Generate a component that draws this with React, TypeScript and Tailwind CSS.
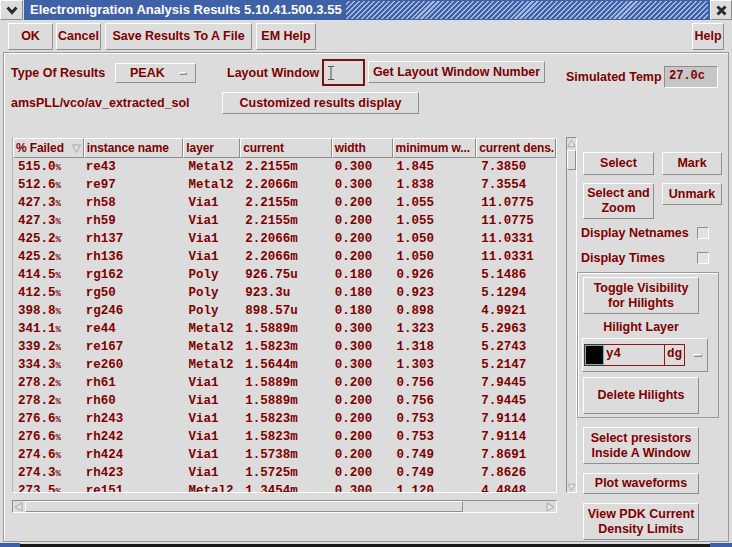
import React from "react";

const RED = "text-[#800000]";

const rows: string[][] = [
  ["515.0", "re43", "Metal2", "2.2155m", "0.300", "1.845", "7.3850"],
  ["512.6", "re97", "Metal2", "2.2066m", "0.300", "1.838", "7.3554"],
  ["427.3", "rh58", "Via1", "2.2155m", "0.200", "1.055", "11.0775"],
  ["427.3", "rh59", "Via1", "2.2155m", "0.200", "1.055", "11.0775"],
  ["425.2", "rh137", "Via1", "2.2066m", "0.200", "1.050", "11.0331"],
  ["425.2", "rh136", "Via1", "2.2066m", "0.200", "1.050", "11.0331"],
  ["414.5", "rg162", "Poly", "926.75u", "0.180", "0.926", "5.1486"],
  ["412.5", "rg50", "Poly", "923.3u", "0.180", "0.923", "5.1294"],
  ["398.8", "rg246", "Poly", "898.57u", "0.180", "0.898", "4.9921"],
  ["341.1", "re44", "Metal2", "1.5889m", "0.300", "1.323", "5.2963"],
  ["339.2", "re167", "Metal2", "1.5823m", "0.300", "1.318", "5.2743"],
  ["334.3", "re260", "Metal2", "1.5644m", "0.300", "1.303", "5.2147"],
  ["278.2", "rh61", "Via1", "1.5889m", "0.200", "0.756", "7.9445"],
  ["278.2", "rh60", "Via1", "1.5889m", "0.200", "0.756", "7.9445"],
  ["276.6", "rh243", "Via1", "1.5823m", "0.200", "0.753", "7.9114"],
  ["276.6", "rh242", "Via1", "1.5823m", "0.200", "0.753", "7.9114"],
  ["274.6", "rh424", "Via1", "1.5738m", "0.200", "0.749", "7.8691"],
  ["274.3", "rh423", "Via1", "1.5725m", "0.200", "0.749", "7.8626"],
  ["273.5", "re151", "Metal2", "1.3454m", "0.300", "1.120", "4.4848"],
];

const cols = [
  { name: "% Failed", head: "w-[71px]", cell: "w-[71px] pl-[5px]" },
  { name: "instance name", head: "w-[100px]", cell: "w-[100px] pl-[2px]" },
  { name: "layer", head: "w-[57px]", cell: "w-[57px] pl-[5px]" },
  { name: "current", head: "w-[92px]", cell: "w-[92px] pl-[5px]" },
  { name: "width", head: "w-[61px]", cell: "w-[61px] pl-[3px]" },
  { name: "minimum w...", head: "w-[84px]", cell: "w-[84px] pl-[4px]" },
  { name: "current dens.", head: "w-[80px]", cell: "w-[80px] pl-[5px]" },
];

const raised = "border border-t-white border-l-white border-r-[#8e8e8e] border-b-[#8e8e8e]";
const sunken = "border border-t-[#8e8e8e] border-l-[#8e8e8e] border-r-white border-b-white";

function Btn({ className = "", children }: { className?: string; children: React.ReactNode }) {
  return (
    <div
      className={`${raised} flex items-center justify-center text-center leading-[15px] font-bold text-[12.5px] ${RED} shrink-0 ${className}`}
    >
      {children}
    </div>
  );
}

function Arrow({ dir }: { dir: "up" | "down" | "left" | "right" }) {
  const pts = {
    up: "1,8 5,1 9,8",
    down: "1,2 5,9 9,2",
    left: "8,1 1,5 8,9",
    right: "2,1 9,5 2,9",
  }[dir];
  return (
    <svg width="10" height="10" viewBox="0 0 10 10">
      <polygon points={pts} fill="#e4e4e4" stroke="#a8a8a8" strokeWidth="1" />
    </svg>
  );
}

function Check() {
  return <div className={`w-[12px] h-[12px] ${sunken} bg-[#e2e2e2]`} />;
}

export default function App() {
  return (
    <div className="w-[732px] h-[547px] bg-[#dcdcdc] flex flex-col overflow-hidden font-['Liberation_Sans',Arial,sans-serif]">
      {/* title bar */}
      <div className="h-[21px] flex shrink-0">
        <div className={`w-[23px] h-[20px] ${raised} bg-[#dcdcdc] flex items-center justify-center`}>
          <svg width="12" height="9" viewBox="0 0 12 9">
            <polyline points="1.5,1.5 6,6.5 10.5,1.5" fill="none" stroke="#2a2a2a" strokeWidth="3" />
          </svg>
        </div>
        <div className="flex-1 h-[20px] flex bg-[#3f61a8] ml-[1px]">
          <div className="pl-[6px] pr-[4px] text-white font-bold text-[13px] leading-[20px] whitespace-nowrap">
            Electromigration Analysis Results 5.10.41.500.3.55
          </div>
          <div className="flex-1 my-[1px] mr-[2px] bg-[repeating-linear-gradient(135deg,#3f61a8_0px,#3f61a8_2px,#a4b8e0_2px,#a4b8e0_3.5px)]" />
        </div>
        <div className={`w-[22px] h-[20px] ${raised} bg-[#dcdcdc] flex items-center justify-center`}>
          <svg width="11" height="11" viewBox="0 0 11 11">
            <path d="M1.5 1.5 L9.5 9.5 M9.5 1.5 L1.5 9.5" stroke="#2a2a2a" strokeWidth="3" />
          </svg>
        </div>
      </div>

      {/* top buttons */}
      <div className="h-[31px] flex items-start pt-[2px] pl-[8px] shrink-0">
        <Btn className="w-[45px] h-[27px]">OK</Btn>
        <Btn className="w-[45px] h-[27px] ml-[3px]">Cancel</Btn>
        <Btn className="w-[147px] h-[27px] ml-[4px]">Save Results To A File</Btn>
        <Btn className="w-[60px] h-[27px] ml-[4px]">EM Help</Btn>
        <Btn className="w-[32px] h-[27px] ml-auto mr-[8px]">Help</Btn>
      </div>

      {/* main frame */}
      <div className="mx-[3px] h-[490px] shrink-0 border border-[#9a9a9a] shadow-[inset_1px_1px_0_#fff] flex flex-col">
        {/* row 1 */}
        <div className="mt-[5px] h-[30px] flex items-start pl-[7px]">
          <div className={`w-[104px] mt-[7px] leading-[16px] font-bold text-[12.5px] ${RED} whitespace-nowrap`}>
            Type Of Results
          </div>
          <div className={`w-[81px] h-[20px] mt-[5px] ${raised} flex items-center pl-[14px] pr-[8px] font-bold text-[12.5px] ${RED}`}>
            <span>PEAK</span>
            <span className={`ml-auto w-[8px] h-[3px] ${raised} bg-[#d0d0d0]`} />
          </div>
          <div className={`w-[95px] ml-[31px] mt-[7px] leading-[16px] font-bold text-[12.5px] ${RED} whitespace-nowrap`}>
            Layout Window
          </div>
          <div className="w-[43px] h-[27px] mt-[1px] border-2 border-[#7a1010] flex items-center pl-[4px]">
            <svg width="6" height="14" viewBox="0 0 6 14">
              <path d="M0 0.5 H6 M3 0.5 V13.5 M0 13.5 H6" stroke="#555" strokeWidth="1" fill="none" />
            </svg>
          </div>
          <Btn className="w-[177px] h-[22px] ml-[3px] mt-[3px]">Get Layout Window Number</Btn>
          <div className={`w-[98px] ml-[21px] mt-[11px] leading-[16px] font-bold text-[12.5px] ${RED} whitespace-nowrap`}>
            Simulated Temp
          </div>
          <div className={`w-[54px] h-[22px] mt-[8px] ${sunken} bg-[#c6c6c6] pl-[4px] leading-[18px] font-bold text-[12px] font-['Liberation_Mono',monospace] ${RED}`}>
            27.0c
          </div>
        </div>

        {/* row 2 */}
        <div className="mt-[4px] h-[22px] flex items-center pl-[7px]">
          <div className={`w-[211px] font-bold text-[12.5px] ${RED} whitespace-nowrap`}>amsPLL/vco/av_extracted_sol</div>
          <Btn className="w-[197px] h-[22px]">Customized results display</Btn>
        </div>

        {/* body */}
        <div className="mt-[23px] flex items-start pl-[8px]">
          {/* table column */}
          <div className="w-[545px] flex flex-col">
            <div className={`h-[356px] ${sunken} border-l-[#b4b4b4] border-t-[#dcdcdc] overflow-hidden`}>
              <div className="flex h-[20px]">
                {cols.map((c, i) => (
                  <div
                    key={c.name}
                    className={`${c.head} ${raised} h-[20px] flex items-center pl-[2px] font-bold text-[12px] tracking-[-0.1px] ${RED} whitespace-nowrap overflow-hidden`}
                  >
                    <span>{c.name}</span>
                    {i === 0 && (
                      <svg className="ml-auto mr-[2px]" width="9" height="9" viewBox="0 0 9 9">
                        <polygon points="0.5,1 8.5,1 4.5,8.5" fill="none" stroke="#a8a8a8" />
                      </svg>
                    )}
                  </div>
                ))}
              </div>
              {rows.map((r, ri) => (
                <div key={ri} className="flex h-[18px] items-center">
                  {r.map((v, ci) => (
                    <div
                      key={ci}
                      className={`${cols[ci].cell} font-['Liberation_Mono',monospace] font-bold text-[12.5px] leading-[18px] ${RED} whitespace-nowrap`}
                    >
                      {v}
                      {ci === 0 && <span className="text-[9px]">%</span>}
                    </div>
                  ))}
                </div>
              ))}
            </div>
            {/* horizontal scrollbar */}
            <div className={`mt-[7px] h-[13px] ${sunken} flex`}>
              <div className="w-[12px] flex items-center justify-center">
                <Arrow dir="left" />
              </div>
              <div className={`w-[438px] ${raised}`} />
              <div className="flex-1" />
              <div className="w-[12px] flex items-center justify-center">
                <Arrow dir="right" />
              </div>
            </div>
          </div>

          {/* vertical scrollbar */}
          <div className={`ml-[9px] w-[11px] h-[356px] ${sunken} flex flex-col`}>
            <div className="h-[12px] flex items-center justify-center">
              <Arrow dir="up" />
            </div>
            <div className={`h-[20px] ${raised}`} />
            <div className="flex-1" />
            <div className="h-[11px] flex items-center justify-center">
              <Arrow dir="down" />
            </div>
          </div>

          {/* right panel */}
          <div className="w-[148px] flex flex-col">
            <div className="mt-[15px] flex">
              <Btn className="ml-[6px] w-[71px] h-[23px]">Select</Btn>
              <Btn className="ml-[8px] w-[60px] h-[23px]">Mark</Btn>
            </div>
            <div className="mt-[8px] flex items-start">
              <Btn className="ml-[6px] w-[71px] h-[36px]">
                Select and
                <br />
                Zoom
              </Btn>
              <Btn className="ml-[8px] w-[60px] h-[22px]">Unmark</Btn>
            </div>
            <div className="mt-[6px] h-[16px] flex items-center pl-[4px]">
              <span className={`font-bold text-[12.5px] ${RED} whitespace-nowrap`}>Display Netnames</span>
              <div className="ml-auto mr-[16px]">
                <Check />
              </div>
            </div>
            <div className="mt-[9px] h-[16px] flex items-center pl-[4px]">
              <span className={`font-bold text-[12.5px] ${RED} whitespace-nowrap`}>Display Times</span>
              <div className="ml-auto mr-[16px]">
                <Check />
              </div>
            </div>

            {/* hilight group */}
            <div className="mt-[6px] w-[142px] h-[146px] border border-[#9a9a9a] shadow-[inset_1px_1px_0_#fff] pl-[5px] pt-[4px] flex flex-col">
              <Btn className="w-[116px] h-[37px]">
                Toggle Visibility
                <br />
                for Hilights
              </Btn>
              <div className={`w-[116px] mt-[4px] h-[18px] leading-[18px] text-center font-bold text-[12.5px] ${RED}`}>
                Hilight Layer
              </div>
              <div className={`mt-[2px] -ml-[1px] w-[126px] h-[34px] ${raised} flex items-center pl-[1px] pr-[5px]`}>
                <div className="w-[101px] h-[22px] border border-[#8a1a1a] flex">
                  <div className="w-[19px] h-[20px] border border-[#3cc6c6] bg-black" />
                  <div className={`w-[61px] border-r border-[#8a1a1a] pl-[2px] font-['Liberation_Mono',monospace] font-bold text-[12.5px] leading-[18px] ${RED}`}>
                    y4
                  </div>
                  <div className={`flex-1 pl-[2px] font-['Liberation_Mono',monospace] font-bold text-[12.5px] leading-[18px] ${RED}`}>
                    dg
                  </div>
                </div>
                <span className={`ml-auto w-[9px] h-[3px] ${raised} bg-[#d0d0d0]`} />
              </div>
              <Btn className="mt-[5px] w-[116px] h-[37px]">Delete Hilights</Btn>
            </div>

            <Btn className="mt-[9px] ml-[6px] w-[116px] h-[37px]">
              Select presistors
              <br />
              Inside A Window
            </Btn>
            <Btn className="mt-[9px] ml-[6px] w-[116px] h-[21px]">Plot waveforms</Btn>
            <Btn className="mt-[9px] ml-[6px] w-[116px] h-[37px]">
              View PDK Current
              <br />
              Density Limits
            </Btn>
          </div>
        </div>
      </div>

      {/* bottom edge */}
      <div className="flex-1 flex items-end">
        <div className="w-[20px] h-[4px] bg-[#3f61a8]" />
        <div className="flex-1 h-[3px] bg-[#1a1a1a]" />
        <div className="w-[22px] h-[4px] bg-[#3f61a8]" />
      </div>
    </div>
  );
}
